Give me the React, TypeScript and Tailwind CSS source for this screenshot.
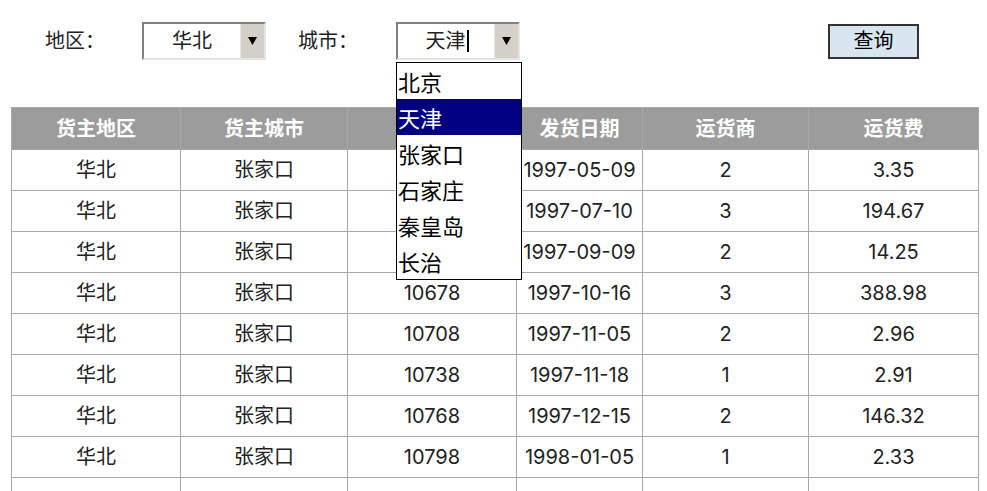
import React from "react";

const rows = [
  ["华北", "张家口", "10574", "1997-05-09", "2", "3.35"],
  ["华北", "张家口", "10620", "1997-07-10", "3", "194.67"],
  ["华北", "张家口", "10648", "1997-09-09", "2", "14.25"],
  ["华北", "张家口", "10678", "1997-10-16", "3", "388.98"],
  ["华北", "张家口", "10708", "1997-11-05", "2", "2.96"],
  ["华北", "张家口", "10738", "1997-11-18", "1", "2.91"],
  ["华北", "张家口", "10768", "1997-12-15", "2", "146.32"],
  ["华北", "张家口", "10798", "1998-01-05", "1", "2.33"],
];

const heads = ["货主地区", "货主城市", "订单号", "发货日期", "运货商", "运货费"];
const widths = [169, 167, 169, 126, 166, 170];

function Arrow() {
  return (
    <div className="w-[24px] self-stretch bg-[#d4d0c8] border-l border-[#e8e8e8] flex items-center justify-center">
      <svg width="9" height="8" viewBox="0 0 9 8">
        <polygon points="0,0 9,0 4.5,8" fill="#000" />
      </svg>
    </div>
  );
}

export default function App() {
  return (
    <div
      className="relative w-[987px] h-[491px] overflow-hidden bg-white text-[#222] pt-[22px]"
      style={{ fontFamily: 'Inter, "Noto Sans CJK SC", sans-serif' }}
    >
      <div className="flex items-center h-[38px] text-[20px] leading-none">
        <span className="ml-[45px] w-[60px]">地区：</span>
        <div className="ml-[37px] w-[124px] h-[38px] flex border-2 border-t-[#808080] border-l-[#808080] border-b-[#e4e4e4] border-r-[#e4e4e4] bg-white">
          <div className="flex-1 flex items-center justify-center">华北</div>
          <Arrow />
        </div>
        <span className="ml-[32px] w-[60px]">城市：</span>
        <div className="ml-[38px] w-[124px] h-[38px] flex border-2 border-t-[#808080] border-l-[#808080] border-b-[#e4e4e4] border-r-[#e4e4e4] bg-white">
          <div className="flex-1 flex items-center justify-center pl-[2px]">
            天津<span className="inline-block w-[2px] h-[22px] bg-black ml-[1px]" />
          </div>
          <Arrow />
        </div>
        <button className="ml-[308px] w-[91px] h-[35px] bg-[#d6e5ee] border-2 border-[#333] flex items-center justify-center text-[20px] text-black">
          查询
        </button>
      </div>

      <div
        className="absolute left-[396px] top-[62px] w-[126px] bg-white border border-black z-10 text-[22px] text-black"
        style={{ fontFamily: '"Noto Sans CJK SC", sans-serif' }}
      >
        {["北京", "天津", "张家口", "石家庄", "秦皇岛", "长治"].map((c) => (
          <div
            key={c}
            className={
              "h-[36px] flex items-center pl-[1px] leading-none " +
              (c === "天津" ? "bg-[#000080] text-white" : "")
            }
          >
            {c}
          </div>
        ))}
      </div>

      <table className="ml-[11px] mt-[47px] border-collapse table-fixed w-[967px] text-[20px]">
        <colgroup>
          {widths.map((w, i) => (
            <col key={i} style={{ width: w }} />
          ))}
        </colgroup>
        <thead>
          <tr className="h-[42px] bg-[#9c9c9c]">
            {heads.map((h) => (
              <th key={h} className="border border-[#a8a8a8] text-white font-bold text-center p-0">
                {h}
              </th>
            ))}
          </tr>
        </thead>
        <tbody>
          {rows.map((r, i) => (
            <tr key={i} className="h-[41px]">
              {r.map((c, j) => (
                <td key={j} className="border border-[#a8a8a8] text-center p-0 whitespace-nowrap">
                  {c}
                </td>
              ))}
            </tr>
          ))}
          <tr className="h-[41px]">
            {widths.map((_, j) => (
              <td key={j} className="border border-[#a8a8a8] p-0" />
            ))}
          </tr>
        </tbody>
      </table>
    </div>
  );
}
